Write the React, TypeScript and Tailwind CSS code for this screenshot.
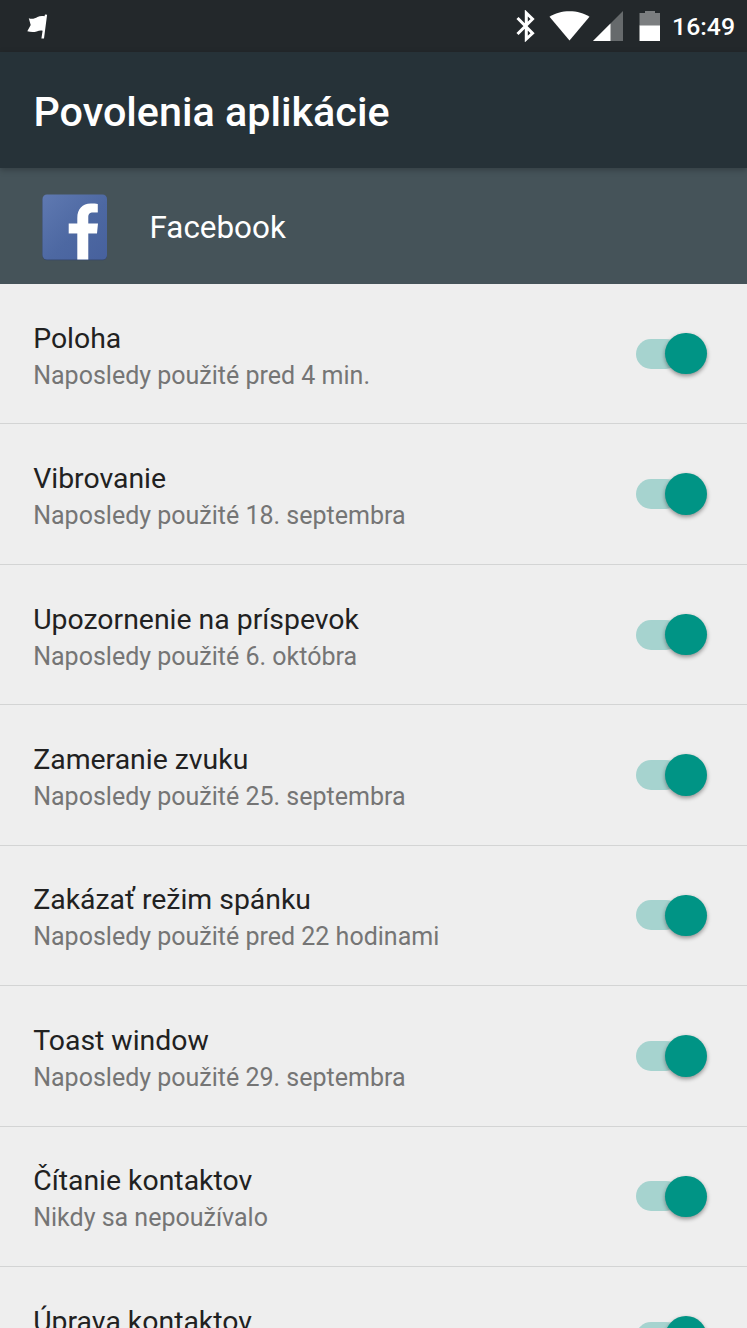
const permissions = [
  { name: 'Poloha', used: 'Naposledy použité pred 4 min.' },
  { name: 'Vibrovanie', used: 'Naposledy použité 18. septembra' },
  { name: 'Upozornenie na príspevok', used: 'Naposledy použité 6. októbra' },
  { name: 'Zameranie zvuku', used: 'Naposledy použité 25. septembra' },
  { name: 'Zakázať režim spánku', used: 'Naposledy použité pred 22 hodinami' },
  { name: 'Toast window', used: 'Naposledy použité 29. septembra' },
  { name: 'Čítanie kontaktov', used: 'Nikdy sa nepoužívalo' },
  { name: 'Úprava kontaktov', used: 'Naposledy použité 29. septembra' },
];

function StatusBar() {
  return (
    <div className="flex h-[52px] shrink-0 items-center justify-between bg-[#23282b] pr-3 pl-[27px] text-white">
      <svg width="22" height="26" viewBox="0 0 22 26" fill="currentColor" aria-hidden>
        <path d="M1.800 5.300C5 6.500 8 5.500 10.500 4 12.500 2.900 15 2.700 17.500 3.200L18 1.400l2.100.4L17 25.600h-2.600l1.200-7.900c-2-.3-3.800-.1-6 .7C6.500 19.300 3.500 19 .3 18.200L3.700 12z" />
      </svg>
      <div className="flex items-center">
        <svg width="110" height="32" viewBox="0 0 110 32" aria-hidden>
          <path
            d="M2.500 8 17.500 23.300 11.300 29V3L17.500 9 2.500 24"
            fill="none"
            stroke="currentColor"
            strokeWidth="3"
          />
          <path d="M54.500 30.500 34.500 6.800C45-.7 64-.7 74.500 6.800z" fill="currentColor" />
        </svg>
        <svg width="67" height="32" viewBox="0 0 67 32" className="-ml-[32px]" aria-hidden>
          <path d="M0 31 30 1v30z" fill="#666a6c" />
          <path d="M0 31 17.500 13.500V31z" fill="currentColor" />
          <path d="M46.500 3H52V1h10v2h5v13H46.500z" fill="#7b7e80" />
          <path d="M46.500 15.500H67V31H46.500z" fill="currentColor" />
        </svg>
        <span className="ml-3 pt-0.5 text-[24.800px] leading-none font-medium">16:49</span>
      </div>
    </div>
  );
}

function FacebookLogo() {
  return (
    <svg width="66" height="68" viewBox="0 0 66 68" className="mt-[3px] shrink-0" aria-hidden>
      <defs>
        <linearGradient id="fb" x1="0" y1="0" x2="1" y2="1">
          <stop offset="0" stopColor="#5f79b1" />
          <stop offset=".55" stopColor="#4d68a2" />
          <stop offset="1" stopColor="#47619d" />
        </linearGradient>
      </defs>
      <rect x=".5" y="1.300" width="64.500" height="65" rx="4.500" fill="#34466b" />
      <rect x=".5" y=".5" width="64.500" height="65" rx="4.500" fill="url(#fb)" />
      <path
        d="M36 66V40h-9V30h9v-6c0-9 4.500-14 13-14h7v9h-4.500c-4 0-5 1.800-5 5v6H56l-1 10h-8.500v26z"
        fill="#3f588f"
        opacity=".6"
      />
      <path
        d="M35.300 65.500V39.500h-8.600v-10h8.600V24c0-9 5-14.500 13.500-14.500 3 0 5 0 7 .5v8.500h-4.500c-4 0-5 1.800-5 5v6h9.700l-1 10h-8.700v26z"
        fill="#fff"
      />
    </svg>
  );
}

function Switch({ label }: { label: string }) {
  return (
    <button
      type="button"
      role="switch"
      aria-checked="true"
      aria-label={label}
      className="flex h-[42px] w-[70px] shrink-0 items-center"
    >
      <span className="h-[30px] w-[45px] shrink-0 rounded-full bg-[#a6d3cf]" />
      <span className="-ml-4 size-[41.500px] shrink-0 rounded-full bg-[#009485] shadow-[0_2px_4px_rgba(0,0,0,0.4)]" />
    </button>
  );
}

export default function App() {
  return (
    <div className="flex h-screen flex-col overflow-hidden bg-[#eeeeee] font-[Roboto,sans-serif]">
      <StatusBar />
      <header className="relative flex h-[116px] shrink-0 items-center bg-[#263238] px-[33.500px] pt-1.5 shadow-[0_2px_6px_rgba(0,0,0,0.25)]">
        <h1 className="text-[41.300px] leading-none font-medium text-white">Povolenia aplikácie</h1>
      </header>
      <section className="flex h-[116px] shrink-0 items-center bg-[#455359] pl-[41.500px] text-white">
        <FacebookLogo />
        <h2 className="ml-[42px] pt-1 text-[31.400px] leading-none">Facebook</h2>
      </section>
      <ul>
        {permissions.map((p) => (
          <li
            key={p.name}
            className="flex h-[140.450px] items-center justify-between border-b-[1.500px] border-[#d3d4d4] pr-[40.700px] pl-[33.200px]"
          >
            <div className="pt-1.5">
              <div className="text-[28.400px] leading-[37px] text-[#212121]">{p.name}</div>
              <div className="text-[25px] leading-[37px] text-[#757575]">{p.used}</div>
            </div>
            <Switch label={p.name} />
          </li>
        ))}
      </ul>
    </div>
  );
}
